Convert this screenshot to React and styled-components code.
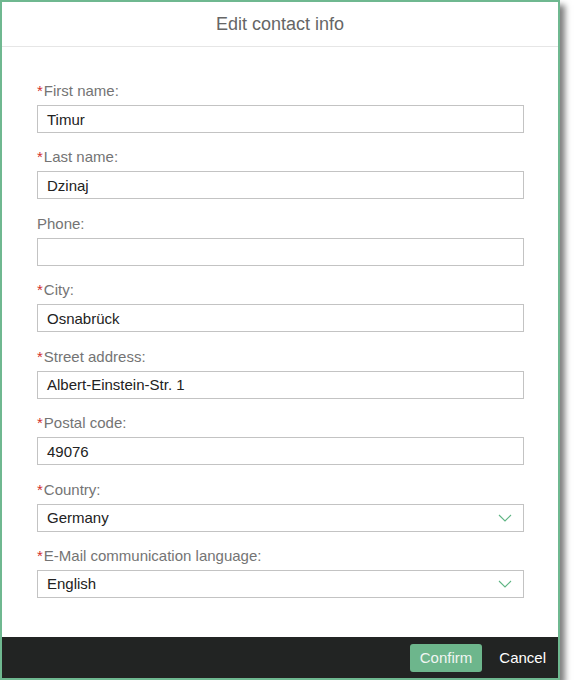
import React from 'react';
import styled, {createGlobalStyle} from 'styled-components';

const GlobalStyle = createGlobalStyle`
    html, body {
        margin: 0;
        padding: 0;
        background: #fff;
        font-family: "Liberation Sans", Arial, sans-serif;
    }
`;

const Dialog = styled.div`
    box-sizing: border-box;
    width: 560px;
    border: 2px solid #6fb890;
    background: #fff;
    box-shadow: 5px 5px 6px rgba(0, 0, 0, 0.5);
    display: flex;
    flex-direction: column;
`;

const Header = styled.div`
    height: 44px;
    border-bottom: 1px solid #e6e6e6;
    display: flex;
    align-items: center;
    justify-content: center;
    font-size: 18px;
    color: #666;
`;

const Body = styled.div`
    padding: 34px 34px 39px 35px;
    display: flex;
    flex-direction: column;
`;

const Field = styled.div`
    display: flex;
    flex-direction: column;
    margin-bottom: 14.43px;
    &:last-child {
        margin-bottom: 0;
    }
`;

const Label = styled.label`
    font-size: 15px;
    line-height: 20px;
    color: #747474;
    margin-bottom: 4px;
`;

const Star = styled.span`
    color: #d2302c;
    margin-right: 1px;
`;

const Input = styled.div`
    box-sizing: border-box;
    height: 28px;
    border: 1px solid #c3c3c3;
    padding: 0 9px;
    display: flex;
    align-items: center;
    justify-content: space-between;
    font-size: 15px;
    color: #222;
`;

const Footer = styled.div`
    height: 41px;
    background: #222423;
    display: flex;
    align-items: center;
    justify-content: flex-end;
    padding-right: 12px;
    gap: 17px;
`;

const Button = styled.button`
    font-family: inherit;
    font-size: 15px;
    border: none;
    cursor: pointer;
    border-radius: 3px;
    height: 28px;
    margin-top: 1px;
    padding: 0 ${p => (p.primary ? '10px' : '0')};
    background: ${p => (p.primary ? '#6db68c' : 'transparent')};
    color: ${p => (p.primary ? '#f0f5f2' : '#fff')};
`;

const Chevron = () => (
    <svg width="14" height="8" viewBox="0 0 14 8" style={{marginRight: 2}}>
        <polyline points="1,1 7,7 13,1" fill="none" stroke="#5fb584" strokeWidth="1.1" />
    </svg>
);

const fields = [
    {label: 'First name:', value: 'Timur', required: true},
    {label: 'Last name:', value: 'Dzinaj', required: true},
    {label: 'Phone:', value: '', required: false},
    {label: 'City:', value: 'Osnabrück', required: true},
    {label: 'Street address:', value: 'Albert-Einstein-Str. 1', required: true},
    {label: 'Postal code:', value: '49076', required: true},
    {label: 'Country:', value: 'Germany', required: true, select: true},
    {label: 'E-Mail communication language:', value: 'English', required: true, select: true}
];

export default function App() {
    return (
        <>
            <GlobalStyle />
            <Dialog>
                <Header>Edit contact info</Header>
                <Body>
                    {fields.map(f => (
                        <Field key={f.label}>
                            <Label>
                                {f.required && <Star>*</Star>}
                                {f.label}
                            </Label>
                            <Input>
                                <span>{f.value}</span>
                                {f.select && <Chevron />}
                            </Input>
                        </Field>
                    ))}
                </Body>
                <Footer>
                    <Button primary>Confirm</Button>
                    <Button>Cancel</Button>
                </Footer>
            </Dialog>
        </>
    );
}
